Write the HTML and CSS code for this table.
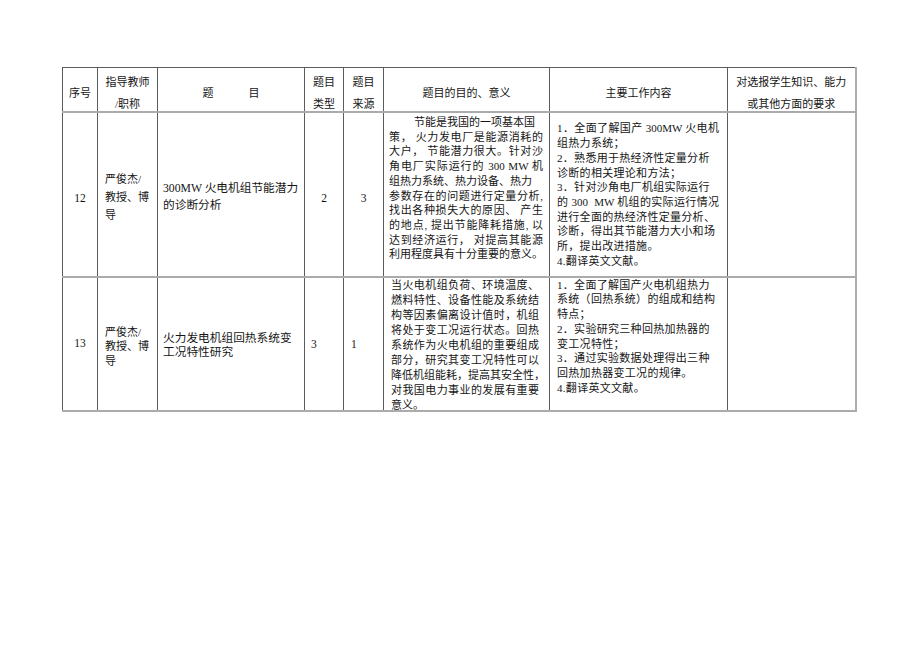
FILE: index.html
```html
<!DOCTYPE html>
<html lang="zh-CN">
<head>
<meta charset="utf-8">
<title>毕业设计题目</title>
<link rel="stylesheet" href="styles.css">
</head>
<body>
<div class="page">
<table class="grid">
<colgroup>
<col class="w1"><col class="w2"><col class="w3"><col class="w4"><col class="w5"><col class="w6"><col class="w7"><col class="w8">
</colgroup>
<tr class="hdr">
<th><span class="hl">序号</span></th>
<th><span class="hl">指导教师<br>/职称</span></th>
<th><span class="hl"><span class="tgap">题</span>目</span></th>
<th><span class="hl">题目<br>类型</span></th>
<th><span class="hl">题目<br>来源</span></th>
<th><span class="hl">题目的目的、意义</span></th>
<th><span class="hl">主要工作内容</span></th>
<th><span class="hl">对选报学生知识、能力<br>或其他方面的要求</span></th>
</tr>
<tr class="r1">
<td class="num">12</td>
<td class="who who1">严俊杰/<br>教授、博<br>导</td>
<td class="title title1">300MW 火电机组节能潜力<br>的诊断分析</td>
<td class="num">2</td>
<td class="num">3</td>
<td class="aim aim1">
<span class="ln ind">节能是我国的一项基本国</span>
<span class="ln j">策， 火力发电厂是能源消耗的</span>
<span class="ln j">大户， 节能潜力很大。针对沙</span>
<span class="ln j">角电厂实际运行的 300 MW 机</span>
<span class="ln">组热力系统、热力设备、热力</span>
<span class="ln j">参数存在的问题进行定量分析,</span>
<span class="ln j">找出各种损失大的原因、 产生</span>
<span class="ln j">的地点, 提出节能降耗措施, 以</span>
<span class="ln j">达到经济运行， 对提高其能源</span>
<span class="ln j">利用程度具有十分重要的意义。</span>
</td>
<td class="work work1">
<span class="ln j">1．全面了解国产 300MW 火电机</span>
<span class="ln ls">组热力系统；</span>
<span class="ln ls">2．熟悉用于热经济性定量分析</span>
<span class="ln ls">诊断的相关理论和方法；</span>
<span class="ln ls">3．针对沙角电厂机组实际运行</span>
<span class="ln j">的 300 &nbsp;MW 机组的实际运行情况</span>
<span class="ln ls">进行全面的热经济性定量分析、</span>
<span class="ln ls">诊断，得出其节能潜力大小和场</span>
<span class="ln ls">所，提出改进措施。</span>
<span class="ln ls">4.翻译英文文献。</span>
</td>
<td></td>
</tr>
<tr class="r2">
<td class="num num2">13</td>
<td class="who who2">严俊杰/<br>教授、博<br>导</td>
<td class="title title2">火力发电机组回热系统变<br>工况特性研究</td>
<td class="num left l4">3</td>
<td class="num left l5">1</td>
<td class="aim aim2">
<span class="ln j">当火电机组负荷、环境温度、</span>
<span class="ln j">燃料特性、设备性能及系统结</span>
<span class="ln j">构等因素偏离设计值时，机组</span>
<span class="ln j">将处于变工况运行状态。回热</span>
<span class="ln j">系统作为火电机组的重要组成</span>
<span class="ln j">部分，研究其变工况特性可以</span>
<span class="ln j ov">降低机组能耗，提高其安全性，</span>
<span class="ln j">对我国电力事业的发展有重要</span>
<span class="ln lastln">意义。</span>
</td>
<td class="work work2">
<span class="ln ls">1．全面了解国产火电机组热力</span>
<span class="ln ls">系统（回热系统）的组成和结构</span>
<span class="ln ls">特点；</span>
<span class="ln ls">2．实验研究三种回热加热器的</span>
<span class="ln ls">变工况特性；</span>
<span class="ln ls">3．通过实验数据处理得出三种</span>
<span class="ln ls">回热加热器变工况的规律。</span>
<span class="ln ls">4.翻译英文文献。</span>
</td>
<td></td>
</tr>
</table>
</div>
</body>
</html>
```

FILE: styles.css
```css
html, body {
  margin: 0;
  background: #ffffff;
}
body {
  color: #151515;
  font-family: "Liberation Serif", "Noto Sans CJK SC", serif;
  font-size: 11px;
}
.page {
  padding: 67px 0 0 62px;
}
.grid {
  border-collapse: collapse;
  table-layout: fixed;
  width: 793px;
}
.w1 { width: 35px; }
.w2 { width: 60px; }
.w3 { width: 147px; }
.w4 { width: 39px; }
.w5 { width: 40px; }
.w6 { width: 166px; }
.w7 { width: 178px; }
.w8 { width: 128px; }

th, td {
  padding: 0;
  font-weight: normal;
  border-left: 1px solid #5c5c5c;
  border-right: 1px solid #5c5c5c;
  border-top: 2px solid #ababab;
  border-bottom: 2px solid #ababab;
  vertical-align: middle;
  text-align: left;
}
th:last-child, td:last-child {
  border-right: 2px solid #adadad;
}
.hdr th {
  border-top: 1px solid #5c5c5c;
  text-align: center;
}
.hl {
  display: block;
  line-height: 22px;
  margin: 3px 0 -5px;
}
.hdr { height: 44px; }
.r1 { height: 165px; }
.r2 { height: 134px; }

.tgap { margin-right: 35px; }

.num {
  text-align: center;
  font-size: 11.5px;
  padding-top: 8px;
}
.num2 { padding-top: 0; padding-bottom: 2px; }
.left { text-align: left; padding-top: 0; }
.l4 { padding-left: 6px; }
.l5 { padding-left: 7px; }

.who { padding-left: 7px; }
.who1 { line-height: 17.8px; padding-top: 8px; }
.who2 { line-height: 14.5px; padding-top: 6px; }

.title { padding-left: 5px; font-size: 11.7px; }
.title1 { line-height: 16.3px; padding-top: 7px; }
.title2 { line-height: 13.5px; padding-top: 4px; }

.ln { display: block; }
.j { text-align: justify; text-align-last: justify; }
.ls { white-space: nowrap; letter-spacing: 0.3px; }
.ind { padding-left: 25px; }
.ov { margin-right: -6px; }
.lastln { margin-bottom: -5px; }

.aim { vertical-align: top; }
.aim1 { padding: 2.5px 6px 0 5px; line-height: 14.7px; }
.aim2 { padding: 0.5px 10px 0 7px; line-height: 15px; }

.work { padding: 0 8px 0 7px; }
.work1 { line-height: 14.7px; padding-top: 2px; }
.work2 { vertical-align: top; line-height: 14.8px; padding-top: 0; }
```
